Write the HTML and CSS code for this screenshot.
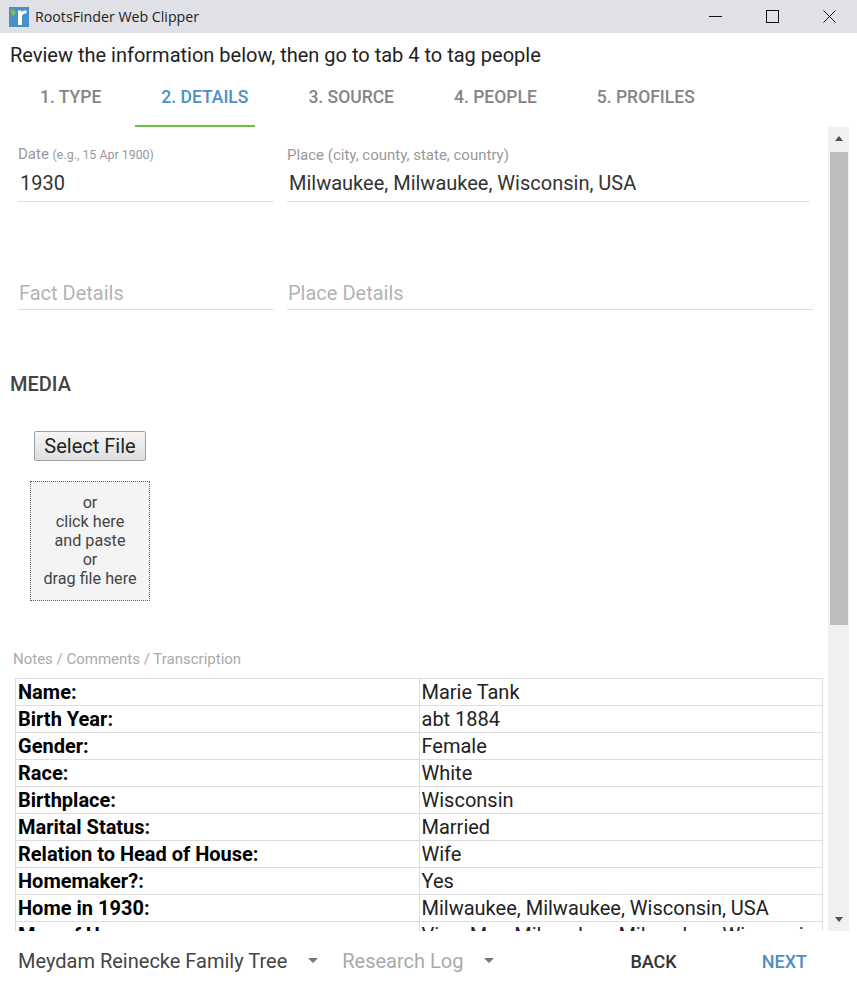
FILE: index.html
```html
<!DOCTYPE html>
<html lang="en">
<head>
<meta charset="utf-8">
<title>RootsFinder Web Clipper</title>
<link rel="stylesheet" href="styles.css">
</head>
<body>
<div class="app">
  <header class="titlebar">
    <svg class="logo" width="20" height="20" viewBox="0 0 20 20">
      <rect width="20" height="20" fill="#4a90c8"/>
      <path d="M9 18V3.5H12.6V5.2C13.6 3.9 15.2 3.2 17.5 3.2V6.6C14.6 6.6 13 7.4 13 9.8V18Z" fill="#fff"/>
      <path d="M1 5L4 1L5 4L8 5L5.5 7L4.5 10L3 7Z" fill="#7cc242"/>
    </svg>
    <span class="app-title">RootsFinder Web Clipper</span>
    <div class="win-controls">
      <svg width="13" height="13" viewBox="0 0 13 13"><path d="M0 6.5H13" stroke="#111" fill="none"/></svg>
      <svg width="13" height="13" viewBox="0 0 13 13"><rect x=".5" y=".5" width="12" height="12" stroke="#111" fill="none"/></svg>
      <svg width="13" height="13" viewBox="0 0 13 13"><path d="M.5 .5L12.5 12.5M12.5 .5L.5 12.5" stroke="#111" fill="none"/></svg>
    </div>
  </header>

  <p class="intro">Review the information below, then go to tab 4 to tag people</p>

  <nav class="tabs">
    <span class="tab">1. Type</span>
    <span class="tab active">2. Details</span>
    <span class="tab">3. Source</span>
    <span class="tab">4. People</span>
    <span class="tab">5. Profiles</span>
  </nav>

  <div class="body-row">
    <main class="content">
      <div class="field-row row-date">
        <div class="field field-short">
          <div class="field-label">Date <small>(e.g., 15 Apr 1900)</small></div>
          <div class="field-value">1930</div>
        </div>
        <div class="field field-place">
          <div class="field-label">Place (city, county, state, country)</div>
          <div class="field-value">Milwaukee, Milwaukee, Wisconsin, USA</div>
        </div>
      </div>
      <div class="field-row row-details">
        <div class="field field-short">
          <div class="field-value placeholder">Fact Details</div>
        </div>
        <div class="field field-wide">
          <div class="field-value placeholder">Place Details</div>
        </div>
      </div>

      <h2 class="section-title">MEDIA</h2>
      <div class="media">
        <button class="file-btn" type="button">Select File</button>
        <div class="dropzone">or<br>click here<br>and paste<br>or<br>drag file here</div>
      </div>

      <div class="notes-label">Notes / Comments / Transcription</div>
      <table class="notes">
        <tr><th>Name:</th><td>Marie Tank</td></tr>
        <tr><th>Birth Year:</th><td>abt 1884</td></tr>
        <tr><th>Gender:</th><td>Female</td></tr>
        <tr><th>Race:</th><td>White</td></tr>
        <tr><th>Birthplace:</th><td>Wisconsin</td></tr>
        <tr><th>Marital Status:</th><td>Married</td></tr>
        <tr><th>Relation to Head of House:</th><td>Wife</td></tr>
        <tr><th>Homemaker?:</th><td>Yes</td></tr>
        <tr><th>Home in 1930:</th><td>Milwaukee, Milwaukee, Wisconsin, USA</td></tr>
        <tr><th>Map of Home:</th><td>View Map Milwaukee, Milwaukee, Wisconsin</td></tr>
      </table>
    </main>
    <div class="scrollbar">
      <span class="arrow arrow-up"></span>
      <div class="scroll-track"><div class="thumb"></div></div>
      <span class="arrow arrow-down"></span>
    </div>
  </div>

  <footer class="footer">
    <span class="select">Meydam Reinecke Family Tree</span>
    <span class="caret"></span>
    <span class="select muted">Research Log</span>
    <span class="caret"></span>
    <span class="spacer"></span>
    <span class="action">BACK</span>
    <span class="action primary">NEXT</span>
  </footer>
</div>
</body>
</html>
```
FILE: styles.css
```css
* { box-sizing: border-box; }
html, body { margin: 0; height: 100%; background: #fff; overflow: hidden; }
body { font-family: Roboto, sans-serif; color: #333; }
.app { height: 985px; display: flex; flex-direction: column; }

.titlebar { height: 33px; flex: none; background: #dfe1e6; display: flex; align-items: center; padding-left: 9px; }
.logo { margin-right: 6px; }
.app-title { font-family: "Open Sans", sans-serif; font-size: 14.2px; color: #222; }
.win-controls { margin-left: auto; display: flex; gap: 44px; padding-right: 21px; }
.win-controls svg { display: block; }

.intro { margin: 0; padding: 11px 10px 0; font-size: 20px; line-height: 22px; height: 33px; color: #222; flex: none; }

.tabs { height: 61px; flex: none; display: flex; padding-left: 10px; }
.tab { position: relative; padding: 0 30px; font-size: 17.5px; font-weight: 500; line-height: 63px; text-transform: uppercase; color: #858585; }
.tab.active { color: #4a90c8; }
.tab.active::after { content: ""; position: absolute; left: 4px; width: 120px; bottom: 0; height: 2px; background: #6cbf45; }

.body-row { height: 804px; flex: none; display: flex; }
.content { width: 828px; overflow: hidden; padding: 0 5px 0 10px; flex: none; }

.field-row { display: flex; }
.row-date { margin-top: 19px; height: 56px; }
.row-details { margin-top: 43px; height: 65px; }
.field { display: flex; flex-direction: column; justify-content: flex-end; border-bottom: 1px solid #ddd; }
.field-short { width: 256px; margin-left: 8px; margin-right: 13px; }
.field-place { width: 523px; }
.field-wide { width: 526px; }
.field-label { font-size: 15px; line-height: 16px; color: #999; margin-bottom: 3px; }
.field-label small { font-size: 12.4px; }
.field-value { font-size: 20px; line-height: 28px; padding: 3px 2px 4px; color: #333; }
.placeholder { color: #b3b3b3; padding: 5px 2px 2px 1px; }

.section-title { margin: 0; padding-top: 64px; font-size: 20px; line-height: 20px; font-weight: 500; color: #444; }

.media { padding-left: 20px; }
.file-btn { display: block; width: 112px; height: 30px; margin: 37px 0 20px 4px; padding: 0; font: 20px Roboto, sans-serif; color: #222; border: 1px solid #a0a0a0; border-radius: 2px; background: linear-gradient(#f6f6f6, #dedede); }
.dropzone { width: 120px; height: 120px; padding-top: 11px; border: 1px dotted #666; background: #f4f4f4; text-align: center; font-size: 16.2px; line-height: 19px; color: #444; }

.notes-label { margin: 49px 0 0 3px; font-size: 15px; line-height: 18px; color: #aaa; }
.notes { width: 808px; margin: 10px 0 0 5px; table-layout: fixed; border-collapse: collapse; font-size: 20px; line-height: 24px; color: #222; }
.notes th, .notes td { padding: 1px 2px; border: 1px solid #ddd; text-align: left; white-space: nowrap; overflow: hidden; }
.notes th { font-weight: 700; color: #000; }

.scrollbar { width: 21px; flex: none; background: #f0f0f0; display: flex; flex-direction: column; align-items: center; }
.arrow { flex: none; width: 0; height: 0; border-left: 4.5px solid transparent; border-right: 4.5px solid transparent; }
.arrow-up { margin: 9px 0 8px; border-bottom: 5px solid #505050; }
.arrow-down { margin: 8px 0 9px; border-top: 5px solid #505050; }
.scroll-track { flex: 1; width: 100%; padding: 3px 1px 0 2px; }
.thumb { height: 473px; background: #bebebe; }

.footer { height: 54px; flex: none; display: flex; align-items: center; padding: 6px 50px 0 18px; font-size: 20px; }
.select { color: #444; }
.select.muted { color: #aaa; }
.caret { width: 0; height: 0; margin: 0 24px 2px 21px; border-left: 5px solid transparent; border-right: 5px solid transparent; border-top: 5px solid #777; }
.spacer { flex: 1; }
.action { font-size: 18px; font-weight: 500; color: #333; margin-left: 85px; }
.action.primary { color: #4a90c8; }
```
